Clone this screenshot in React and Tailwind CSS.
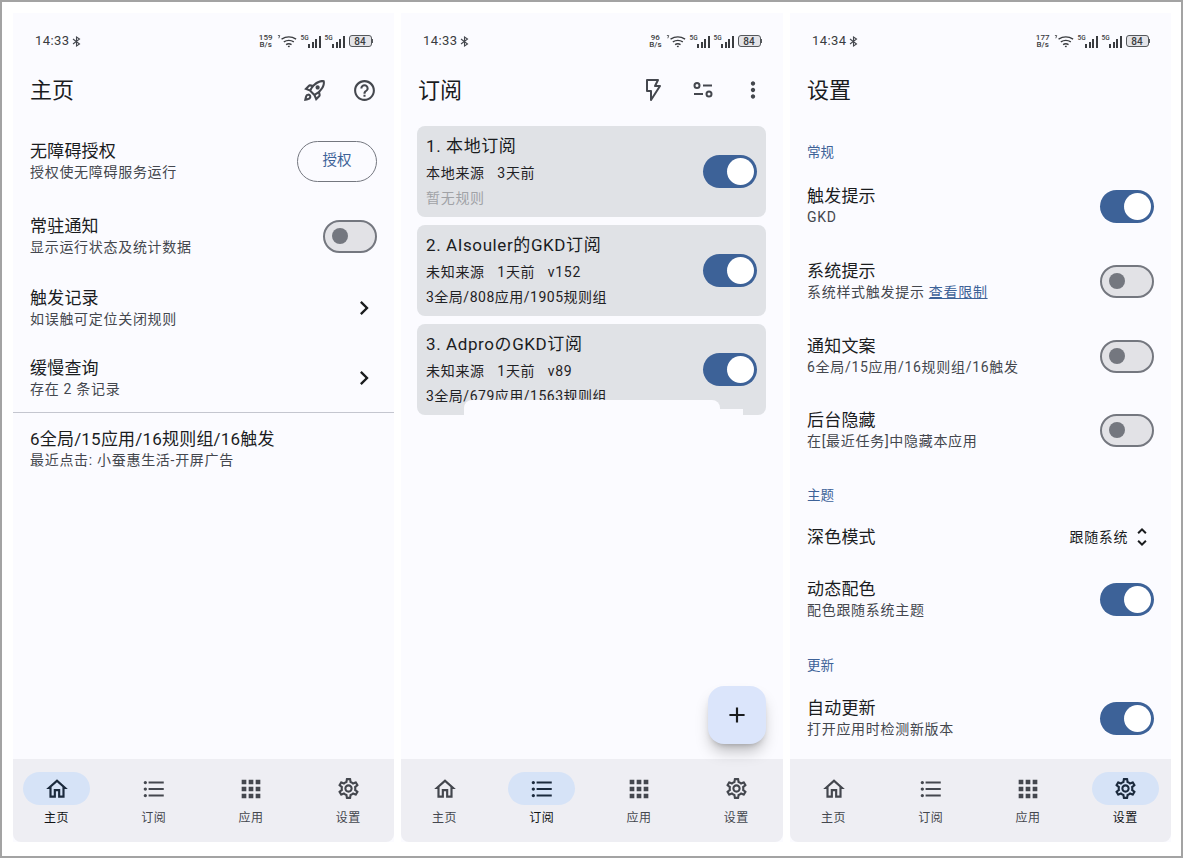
import React from "react";
import {
  MdOutlineHome,
  MdFormatListBulleted,
  MdApps,
  MdOutlineSettings,
  MdOutlineRocketLaunch,
  MdHelpOutline,
  MdMoreVert,
  MdUnfoldMore,
  MdChevronRight,
  MdAdd,
} from "react-icons/md";

const font = { fontFamily: '"Roboto", "Noto Sans CJK SC", sans-serif' };

const Toggle = ({ on }) =>
  on ? (
    <div className="flex h-[33px] w-[54px] shrink-0 items-center justify-end rounded-full bg-[#3d6298] pr-[3px]">
      <div className="h-[27px] w-[27px] rounded-full bg-white" />
    </div>
  ) : (
    <div className="flex h-[33px] w-[54px] shrink-0 items-center rounded-full border-2 border-[#74777f] bg-[#e2e2e6] pl-[7px]">
      <div className="h-[16px] w-[16px] rounded-full bg-[#74777f]" />
    </div>
  );

const Row = ({ title, sub, right, className }) => (
  <div className={`flex items-center justify-between px-[17px] ${className}`}>
    <div>
      <p className="text-[17px] leading-[22px] tracking-[0.2px] text-[#1a1c1e]">{title}</p>
      {sub && <p className="text-[14px] leading-[20px] tracking-[0.7px] text-[#44474e]">{sub}</p>}
    </div>
    {right}
  </div>
);

const Label = ({ children, className }) => (
  <p className={`flex h-[24px] items-center px-[17px] text-[13.5px] text-[#3d6298] ${className}`}>{children}</p>
);

const StatusBar = ({ time, speed }) => (
  <div className="flex h-[56px] shrink-0 items-center justify-between pl-[22px] pr-[21px] text-[#3a3c40]">
    <div className="flex items-center gap-[3px] text-[13px] tracking-[0.4px]">
      <span>{time}</span>
      <svg width="9" height="11" viewBox="0 0 9 11" fill="none" stroke="#44474e" strokeWidth="1.1">
        <path d="M1 3l6.5 5L4.500 10V1l3 2L1 8" />
      </svg>
    </div>
    <div className="flex items-center gap-[4px]">
      <div className="flex flex-col items-center text-[8px] font-medium leading-[7px]">
        <span>{speed}</span>
        <span>B/s</span>
      </div>
      <svg width="20" height="14" viewBox="0 0 22 14" fill="none" stroke="#3a3c40">
        <path d="M1 1h2L2 4" strokeWidth="0.9" />
        <path d="M5 5q8-5 16 0M7.500 8q5.500-3.500 11 0M10 11q3-2 6 0" strokeWidth="1.500" />
        <path d="M12 13h2" strokeWidth="1.500" />
      </svg>
      <Signal />
      <Signal />
      <div className="flex items-center">
        <div className="flex h-[12px] w-[23px] items-center justify-center rounded-[3px] border border-[#55585c] bg-[#e4e4e8] text-[10px] font-medium">
          84
        </div>
        <div className="h-[4px] w-[1.500px] bg-[#55585c]" />
      </div>
    </div>
  </div>
);

const Signal = () => (
  <div className="relative flex h-[13px] w-[20px] items-end justify-end gap-[1.500px]">
    <span className="absolute left-0 top-0 text-[6.500px] font-medium leading-[7px]">5G</span>
    <div className="h-[4px] w-[2px] bg-[#3a3c40]" />
    <div className="h-[6px] w-[2px] bg-[#3a3c40]" />
    <div className="h-[9px] w-[2px] bg-[#3a3c40]" />
    <div className="h-[12px] w-[2px] bg-[#3a3c40]" />
  </div>
);

const TitleBar = ({ title, children }) => (
  <div className="flex h-[42px] shrink-0 items-center justify-between pl-[17px] pr-[17px]">
    <h1 className="text-[22px] font-normal text-[#1a1c1e]">{title}</h1>
    <div className="flex items-center text-[#44474e]">{children}</div>
  </div>
);

const navItems = [
  { label: "主页", Icon: MdOutlineHome, size: 26 },
  { label: "订阅", Icon: MdFormatListBulleted, size: 26 },
  { label: "应用", Icon: MdApps, size: 28 },
  { label: "设置", Icon: MdOutlineSettings, size: 25 },
];

const BottomNav = ({ active }) => (
  <div className="h-[83px] shrink-0 overflow-hidden rounded-b-lg bg-[#eeeef3]">
    <div className="-ml-[5px] grid w-[389px] grid-cols-4 pt-[13px]">
      {navItems.map(({ label, Icon, size }, i) => (
        <div key={label} className="flex flex-col items-center">
          <div
            className={
              i === active
                ? "flex h-[33px] w-[67px] items-center justify-center rounded-full bg-[#d6e3f7] text-[#1b2a3d]"
                : "flex h-[33px] w-[67px] items-center justify-center text-[#44474e]"
            }
          >
            <Icon size={size} />
          </div>
          <span
            className={
              i === active
                ? "mt-[4px] text-[12px] leading-[18px] tracking-[0.5px] text-[#111315]"
                : "mt-[4px] text-[12px] leading-[18px] tracking-[0.5px] text-[#44474e]"
            }
          >
            {label}
          </span>
        </div>
      ))}
    </div>
  </div>
);

const Card = ({ title, meta, info, muted, children }) => (
  <div className="relative flex h-[91px] items-center justify-between overflow-hidden rounded-lg bg-[#e0e2e6] pl-[9px] pr-[9px]">
    <div className="-mt-[1px] h-full pt-[8px]">
      <p className="mb-[2px] text-[17px] leading-[25px] tracking-[0.6px] text-[#1a1c1e]">{title}</p>
      <p className="whitespace-pre text-[14px] leading-[25px] tracking-[0.7px] text-[#1f2124]">{meta}</p>
      <p className={muted ? "text-[14px] leading-[25px] tracking-[0.7px] text-[#a0a2a6]" : "text-[14px] leading-[25px] tracking-[0.5px] text-[#1f2124]"}>
        {info}
      </p>
    </div>
    <Toggle on />
    {children}
  </div>
);

const BoltIcon = () => (
  <svg width="26" height="26" viewBox="0 0 26 26" fill="none" stroke="#44474e" strokeWidth="2" strokeLinejoin="round">
    <path d="M7 3h11l-3 6h5l-9 14v-9H7z" />
  </svg>
);

const FilterIcon = () => (
  <svg width="24" height="24" viewBox="0 0 24 24" fill="none" stroke="#44474e" strokeWidth="2">
    <circle cx="6" cy="7.500" r="2.500" />
    <path d="M12 7.500h9" />
    <path d="M3 16h9" />
    <circle cx="18" cy="16" r="2.500" />
  </svg>
);

const Home = () => (
  <div style={font} className="flex w-[381px] flex-col bg-[#fbfbff]">
    <StatusBar time="14:33" speed="159" />
    <TitleBar title="主页">
      <MdOutlineRocketLaunch size={25} className="mr-[25px]" />
      <MdHelpOutline size={25} />
    </TitleBar>
    <div className="flex-1">
      <Row
        className="mt-[14px] h-[72px]"
        title="无障碍授权"
        sub="授权使无障碍服务运行"
        right={
          <div className="flex h-[41px] w-[80px] items-center justify-center rounded-full border border-[#74777f] text-[14.500px] text-[#3d6298]">
            授权
          </div>
        }
      />
      <Row className="mt-[3px] h-[72px]" title="常驻通知" sub="显示运行状态及统计数据" right={<Toggle />} />
      <Row className="h-[72px]" title="触发记录" sub="如误触可定位关闭规则" right={<MdChevronRight size={28} className="-mr-[1px] text-[#1a1c1e]" />} />
      <Row className="h-[68px]" title="缓慢查询" sub="存在 2 条记录" right={<MdChevronRight size={28} className="-mr-[1px] text-[#1a1c1e]" />} />
      <div className="h-px bg-[#c4c6cf]" />
      <Row className="h-[72px]" title="6全局/15应用/16规则组/16触发" sub="最近点击: 小蚕惠生活-开屏广告" />
    </div>
    <BottomNav active={0} />
  </div>
);

const Subs = () => (
  <div style={font} className="relative flex w-[382px] flex-col bg-[#fbfbff]">
    <StatusBar time="14:33" speed="96" />
    <TitleBar title="订阅">
      <BoltIcon />
      <div className="ml-[25px]">
        <FilterIcon />
      </div>
      <MdMoreVert size={26} className="ml-[25px]" />
    </TitleBar>
    <div className="flex flex-1 flex-col gap-2 pl-[16px] pr-[17px] pt-[15px]">
      <Card title="1. 本地订阅" meta="本地来源   3天前" info="暂无规则" muted />
      <Card title="2. AIsouler的GKD订阅" meta="未知来源   1天前   v152" info="3全局/808应用/1905规则组" />
      <Card title="3. AdproのGKD订阅" meta="未知来源   1天前   v89" info="3全局/679应用/1563规则组">
        <div className="absolute bottom-0 left-[47px] h-[15px] w-[256px] rounded-t-lg bg-[#fbfbff]" />
        <div className="absolute bottom-0 left-[296px] h-[6px] w-[30px] bg-[#fbfbff]" />
      </Card>
    </div>
    <BottomNav active={1} />
    <div className="absolute bottom-[98px] right-[17px] flex h-[58px] w-[58px] items-center justify-center rounded-2xl bg-[#dbe5fb] text-[#1a1c1e] shadow-lg shadow-black/25">
      <MdAdd size={26} />
    </div>
  </div>
);

const Settings = () => (
  <div style={font} className="flex w-[381px] flex-col bg-[#fbfbff]">
    <StatusBar time="14:34" speed="177" />
    <TitleBar title="设置" />
    <div className="flex-1">
      <Label className="mt-[29px]">常规</Label>
      <Row className="mt-[5px] h-[74px]" title="触发提示" sub="GKD" right={<Toggle on />} />
      <Row className="mt-px h-[74px]" title="系统提示" sub={<>系统样式触发提示 <span className="text-[#3d6298] underline">查看限制</span></>} right={<Toggle />} />
      <Row className="mt-px h-[74px]" title="通知文案" sub="6全局/15应用/16规则组/16触发" right={<Toggle />} />
      <Row className="h-[74px]" title="后台隐藏" sub="在[最近任务]中隐藏本应用" right={<Toggle />} />
      <Label className="mt-[16px]">主题</Label>
      <Row
        className="mt-[5px] h-[50px]"
        title="深色模式"
        right={
          <div className="flex items-center gap-[2px] text-[14px] tracking-[0.6px] text-[#1a1c1e]">
            跟随系统
            <MdUnfoldMore size={24} />
          </div>
        }
      />
      <Row className="h-[74px]" title="动态配色" sub="配色跟随系统主题" right={<Toggle on />} />
      <Label className="mt-[17px]">更新</Label>
      <Row className="mt-[4px] h-[74px]" title="自动更新" sub="打开应用时检测新版本" right={<Toggle on />} />
    </div>
    <BottomNav active={3} />
  </div>
);

export default function App() {
  return (
    <div className="flex h-[858px] w-[1183px] gap-[7px] border-2 border-[#a3a3a3] bg-white pb-[14px] pl-[11px] pt-[11px]">
      <Home />
      <Subs />
      <Settings />
    </div>
  );
}
